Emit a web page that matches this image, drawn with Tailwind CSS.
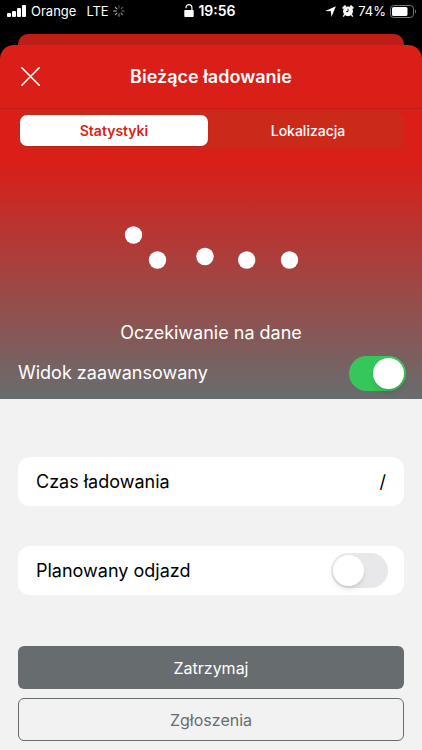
<!DOCTYPE html>
<html lang="pl">

<head>
    <meta charset="UTF-8" />
    <meta name="viewport" content="width=device-width, initial-scale=1.0" />
    <title>Bieżące ładowanie</title>
    <script src="https://cdn.jsdelivr.net/npm/@tailwindcss/browser@4"></script>
</head>

<body class="min-h-screen bg-[#f2f2f2] font-['Inter','Liberation_Sans',sans-serif] text-black">
    <div class="bg-black">
        <!-- Status bar -->
        <div class="grid h-[34px] grid-cols-3 items-start pt-[3px] pl-[7px] pr-[5px] text-[13px] leading-4 text-white">
            <div class="flex items-center gap-1">
                <svg class="h-3 w-5" viewBox="0 0 20 12" fill="currentColor">
                    <rect x="0" y="8" width="4" height="4" rx="1" />
                    <rect x="5" y="6" width="4" height="6" rx="1" />
                    <rect x="10" y="3" width="4" height="9" rx="1" />
                    <rect x="15" y="0" width="4" height="12" rx="1" />
                </svg>
                <span>Orange</span>
                <span class="ml-1.5">LTE</span>
                <svg class="size-3" viewBox="0 0 12 12" fill="none" stroke="#fff" stroke-width="1.1" stroke-linecap="round">
                    <path d="M6 .7v2.4" opacity=".3" />
                    <path d="M9.7 2.3 8.1 3.9" opacity=".35" />
                    <path d="M11.3 6H8.9" opacity=".4" />
                    <path d="M9.7 9.7 8.1 8.1" opacity=".5" />
                    <path d="M6 11.3V8.9" opacity=".55" />
                    <path d="M2.3 9.7l1.6-1.6" opacity=".65" />
                    <path d="M.7 6h2.4" opacity=".8" />
                    <path d="M2.3 2.3l1.6 1.6" opacity=".7" />
                </svg>
            </div>
            <div class="flex items-center justify-center gap-1 pr-1 text-sm leading-4 font-semibold">
                <svg class="h-[14px] w-[10px]" viewBox="0 0 10 14">
                    <rect x="0.3" y="6" width="9.4" height="7" rx="0.8" fill="#fff" />
                    <path d="M2 4.3V3.6a2.9 2.9 0 0 1 5.9 0V6.5" fill="none" stroke="#fff" stroke-width="1.2" />
                </svg>
                <span>19:56</span>
            </div>
            <div class="flex items-center justify-end gap-1">
                <svg class="mr-0.5 size-[11px]" viewBox="0 0 11 11" fill="#fff">
                    <path d="M10.9.2 6.4 10.9 5.9 5.2.2 4.9z" />
                </svg>
                <svg class="size-3" viewBox="0 0 12 12">
                    <path d="M1.3 2.9 3 1.2M10.7 2.9 9 1.2" stroke="#fff" stroke-width="2" stroke-linecap="round" />
                    <path d="m2.6 9.6-1 1.5M9.4 9.6l1 1.5" stroke="#fff" stroke-width="1.3" stroke-linecap="round" />
                    <circle cx="6" cy="6.3" r="4.9" fill="#fff" />
                    <path d="M6 3.8v2.8H4" fill="none" stroke="#000" stroke-width="0.9" />
                </svg>
                <span>74%</span>
                <svg class="h-[13px] w-[27px]" viewBox="0 0 27 13">
                    <rect x="0.5" y="0.5" width="23" height="12" rx="3.2" fill="none" stroke="#777" />
                    <rect x="2" y="2" width="15.5" height="9" rx="1.6" fill="#fff" />
                    <path d="M25 4.6c1.6.6 1.6 3.2 0 3.8z" fill="#777" />
                </svg>
            </div>
        </div>

        <!-- Edge of the sheet underneath -->
        <div class="mx-[18px] h-[11px] rounded-t-[10px] bg-[#be1e16]"></div>

        <!-- Current sheet -->
        <div class="rounded-t-[14px] bg-linear-to-b/srgb from-[#da1e18] from-33% to-[#676d6e]">
            <header class="grid h-16 grid-cols-[62px_1fr_62px] items-center border-b border-[#b82018]">
                <button type="button" aria-label="Zamknij" class="flex h-full items-center pl-[21px]">
                    <svg class="size-[19px]" viewBox="0 0 19 19" stroke="#fff" stroke-width="1.6" stroke-linecap="round">
                        <path d="M.8.8l17.4 17.4M18.2.8.8 18.2" />
                    </svg>
                </button>
                <h1 class="text-center text-lg font-semibold text-white">Bieżące ładowanie</h1>
            </header>

            <!-- Tabs -->
            <div role="tablist" class="mx-[18px] mt-[3px] grid h-[37px] grid-cols-2 rounded-[9px] bg-[#cb2a1b] py-[3px] pl-[2px] text-sm">
                <button type="button" role="tab" aria-selected="true"
                    class="mr-1 rounded-[7px] bg-white font-semibold text-[#da1e18] shadow-sm">Statystyki</button>
                <button type="button" role="tab" aria-selected="false" class="font-medium text-white">Lokalizacja</button>
            </div>

            <!-- Waiting indicator -->
            <div role="status" class="flex flex-col items-center pt-[73px] text-lg text-white">
                <svg class="h-12 w-[176px]" viewBox="0 0 176 48" fill="currentColor">
                    <circle cx="10.5" cy="13" r="8.7" />
                    <circle cx="34.5" cy="38" r="8.7" />
                    <circle cx="82" cy="34.5" r="8.7" />
                    <circle cx="123.7" cy="38" r="8.7" />
                    <circle cx="166.5" cy="38" r="8.7" />
                </svg>
                <p class="mt-[49px] leading-7">Oczekiwanie na dane</p>
            </div>

            <div class="flex h-[52px] items-center justify-between pr-4 pl-[18px] text-lg text-white">
                <label for="advanced">Widok zaawansowany</label>
                <input type="checkbox" role="switch" id="advanced" checked
                    class="flex h-[35px] w-[57px] appearance-none items-center rounded-full bg-[#e8e8ea] px-[2px] before:size-[31px] before:rounded-full before:bg-white before:shadow-md checked:justify-end checked:bg-[#35c759]" />
            </div>
        </div>
    </div>

    <!-- Charging details -->
    <main class="px-[18px] pt-[58px] pb-2 text-lg">
        <div class="flex h-[49px] items-center justify-between rounded-xl bg-white px-[18px]">
            <span>Czas ładowania</span>
            <span>/</span>
        </div>

        <div class="mt-10 flex h-[49px] items-center justify-between rounded-xl bg-white pr-4 pl-[18px]">
            <label for="departure">Planowany odjazd</label>
            <input type="checkbox" role="switch" id="departure"
                class="flex h-[35px] w-[57px] appearance-none items-center rounded-full bg-[#e8e8ea] px-[2px] before:size-[31px] before:rounded-full before:bg-white before:shadow-md checked:justify-end checked:bg-[#35c759]" />
        </div>

        <div class="mt-[51px] flex flex-col gap-[9px] text-base">
            <button type="button" class="h-[43px] rounded-md bg-[#676d6e] text-white">Zatrzymaj</button>
            <button type="button" class="h-[43px] rounded-md border border-[#676d6e] text-[#676d6e]">Zgłoszenia</button>
        </div>
    </main>
</body>

</html>
